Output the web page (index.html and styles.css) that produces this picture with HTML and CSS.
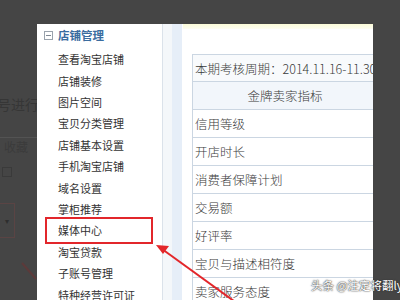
FILE: index.html
```html
<!DOCTYPE html>
<html lang="zh">
<head>
<meta charset="utf-8">
<link rel="stylesheet" href="styles.css">
</head>
<body>
<div class="page">
  <div class="dim">
    <div class="dim-text dim-a">号进行</div>
    <div class="dim-rule"></div>
    <div class="dim-text dim-b">收藏</div>
    <div class="dim-icons"><span class="dim-ico"></span></div>
    <div class="dim-select"><span class="dim-caret">▾</span></div>
  </div>
  <div class="panel">
    <div class="sidebar">
      <div class="side-head"><span class="toggle"></span><span class="head-text">店铺管理</span></div>
      <ul class="menu">
        <li>查看淘宝店铺</li>
        <li>店铺装修</li>
        <li>图片空间</li>
        <li>宝贝分类管理</li>
        <li>店铺基本设置</li>
        <li>手机淘宝店铺</li>
        <li>域名设置</li>
        <li>掌柜推荐</li>
        <li class="marked">媒体中心</li>
        <li>淘宝贷款</li>
        <li>子账号管理</li>
        <li>特种经营许可证</li>
      </ul>
    </div>
    <div class="gutter"><div class="g1"></div><div class="g2"></div></div>
    <div class="content">
      <div class="notice"></div>
      <table class="grid">
        <tr class="r-period"><td>本期考核周期：2014.11.16-11.30</td></tr>
        <tr class="r-head"><td>金牌卖家指标</td></tr>
        <tr><td>信用等级</td></tr>
        <tr><td>开店时长</td></tr>
        <tr><td>消费者保障计划</td></tr>
        <tr><td>交易额</td></tr>
        <tr><td>好评率</td></tr>
        <tr><td>宝贝与描述相符度</td></tr>
        <tr><td>卖家服务态度</td></tr>
      </table>
    </div>
  </div>
</div>
<svg class="arrows" width="400" height="300" viewBox="0 0 400 300">
  <line x1="22" y1="263" x2="36" y2="279" stroke="#5c3a3a" stroke-width="2"/>
  <line x1="238" y1="304" x2="162" y2="249" stroke="#e3262a" stroke-width="2"/>
  <polygon points="156,245 169,246 163,254" fill="#e3262a"/>
</svg>
<div class="watermark">头条 @注定将翻ly</div>
</body>
</html>
```
FILE: styles.css
```css
html, body {
  margin: 0;
  padding: 0;
}
body {
  width: 400px;
  height: 300px;
  overflow: hidden;
  background: #454545;
  font-family: "Noto Sans CJK SC", "Noto Sans", sans-serif;
  position: relative;
}
.page {
  display: flex;
  height: 300px;
}
.dim {
  width: 37px;
  flex: none;
  position: relative;
  overflow: hidden;
}
.dim-text {
  color: #363636;
  white-space: nowrap;
  font-size: 14px;
}
.dim-a {
  margin-top: 94px;
  margin-left: -3px;
}
.dim-rule {
  margin-top: 23px;
  height: 1px;
  background: #535353;
}
.dim-b {
  margin-top: 0;
  margin-left: 4px;
  font-size: 12px;
  color: #3b3b3b;
}
.dim-icons {
  margin-top: 12px;
  height: 14px;
}
.dim-ico {
  display: block;
  margin-left: 2px;
  width: 8px;
  height: 8px;
  border: 1px solid #3a3a3a;
}
.dim-select {
  margin-top: 22px;
  width: 14px;
  height: 33px;
  border: 1px solid #5a4444;
  border-left: none;
  display: flex;
  align-items: center;
  justify-content: center;
}
.dim-caret {
  font-size: 8px;
  color: #2e2e2e;
}
.panel {
  margin-top: 24px;
  width: 336px;
  height: 276px;
  background: #fff;
  display: flex;
  overflow: hidden;
}
.sidebar {
  width: 125px;
  flex: none;
}
.side-head {
  height: 22px;
  display: flex;
  align-items: center;
}
.toggle {
  margin-left: 7px;
  width: 7px;
  height: 7px;
  border: 1px solid #9aa3ad;
  position: relative;
}
.toggle::after {
  content: "";
  position: absolute;
  left: 1px;
  right: 1px;
  top: 3px;
  height: 1px;
  background: #7f8893;
}
.head-text {
  margin-left: 5px;
  font-size: 11.5px;
  font-weight: bold;
  color: #3a6c9f;
}
.menu {
  list-style: none;
  margin: 3.3px 0 0 0;
  padding: 0 0 0 21px;
}
.menu li {
  height: 21.4px;
  line-height: 21.4px;
  font-size: 11px;
  color: #333;
  white-space: nowrap;
}
.menu li.marked {
  position: relative;
}
.menu li.marked::after {
  content: "";
  position: absolute;
  left: -13px;
  top: -3px;
  width: 104px;
  height: 23px;
  border: 2px solid #e2262b;
}
.gutter {
  width: 20px;
  flex: none;
  display: flex;
  border-left: 1px solid #dbe2ea;
}
.g1 {
  width: 9px;
  background: #f4f7fa;
}
.g2 {
  width: 10px;
  background: #e6eef8;
}
.content {
  flex: 1;
  overflow: hidden;
}
.notice {
  height: 5px;
  background: linear-gradient(#fbfbd8, #fefef2);
}
.grid {
  margin-top: 25px;
  margin-left: 9px;
  width: 184px;
  border-collapse: collapse;
  table-layout: fixed;
}
.grid td {
  border: 1px solid #cbd6e2;
  padding: 0 0 0 2px;
  font-size: 12.5px;
  font-weight: 300;
  color: #3a3a3a;
  white-space: nowrap;
  overflow: hidden;
  box-sizing: border-box;
  height: 28px;
}
.r-period td {
  height: 27px;
  background: #f8fafc;
}
.r-head td {
  text-align: center;
  background: #f2f6fb;
}
.arrows {
  position: absolute;
  left: 0;
  top: 0;
  pointer-events: none;
}
.watermark {
  position: absolute;
  left: 311px;
  top: 277px;
  font-size: 11.5px;
  color: #fff;
  white-space: nowrap;
  text-shadow: 0 0 1px #222, 0 0 2px #444;
}
```
